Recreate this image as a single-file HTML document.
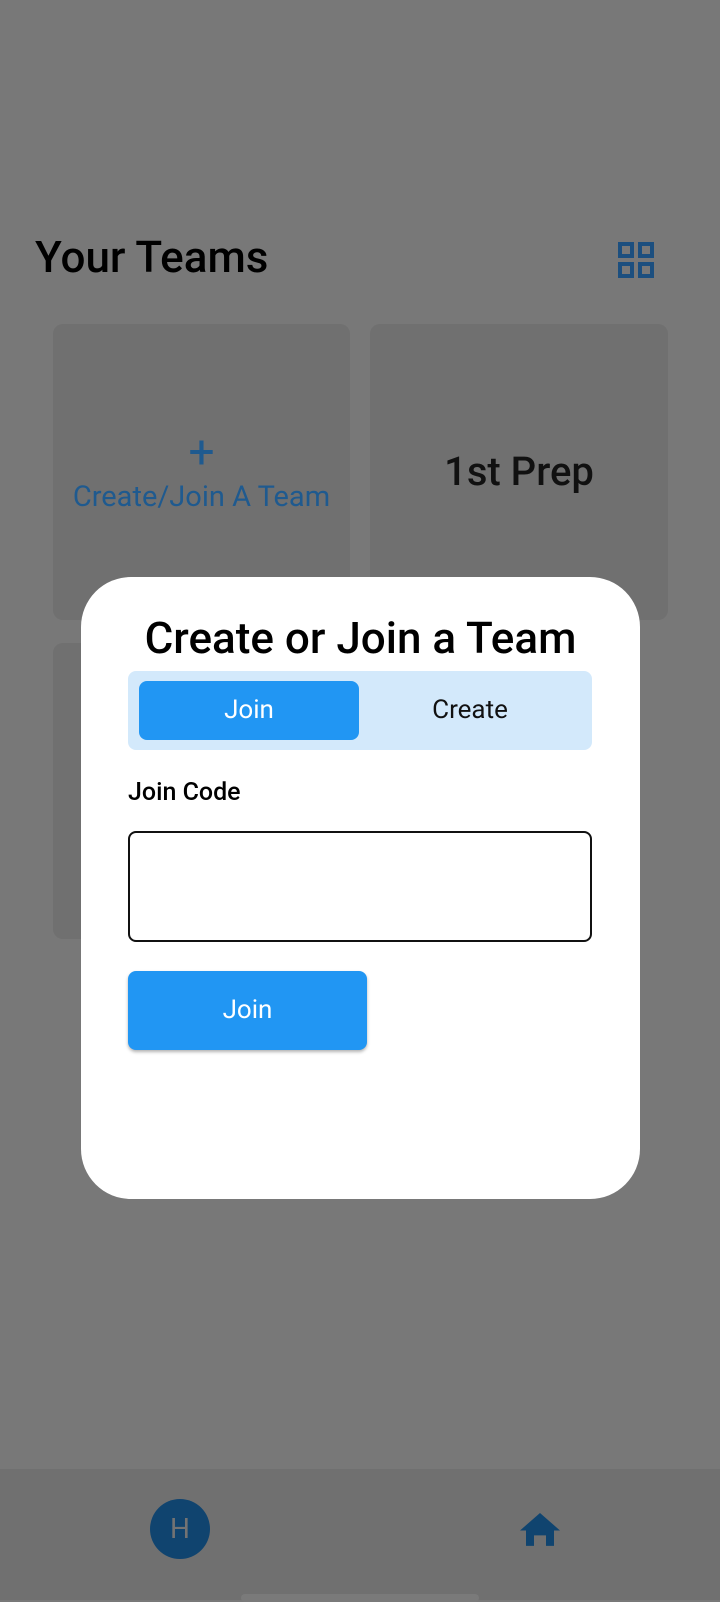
<!DOCTYPE html>
<html><head><meta charset="utf-8"><style>
*{margin:0;padding:0;box-sizing:border-box}
body{width:720px;height:1600px;background:#787878;position:relative;overflow:hidden;font-family:"Roboto","Liberation Sans",sans-serif}
.a{position:absolute}
.card{position:absolute;background:#707070;border-radius:10px}
</style></head><body>
<div class="a" style="left:35px;top:231px;font-size:44px;font-weight:500;color:#000">Your Teams</div>
<svg class="a" style="left:618px;top:242px" width="36" height="36" viewBox="0 0 36 36" fill="none" stroke="#1c4f7f" stroke-width="4"><rect x="2" y="2" width="12" height="12"/><rect x="22" y="2" width="12" height="12"/><rect x="2" y="22" width="12" height="12"/><rect x="22" y="22" width="12" height="12"/></svg>
<div class="card" style="left:53px;top:324px;width:297px;height:296px"></div>
<div class="card" style="left:370px;top:324px;width:298px;height:296px"></div>
<div class="card" style="left:53px;top:643px;width:297px;height:296px"></div>
<div class="a" style="left:53px;top:428px;width:297px;text-align:center;color:#1f5a8f;font-size:46px;line-height:50px">+</div>
<div class="a" style="left:53px;top:480px;width:297px;text-align:center;color:#1f5a8f;font-size:29px">Create/Join A Team</div>
<div class="a" style="left:370px;top:448px;width:298px;text-align:center;color:#111;font-size:40px;font-weight:500">1st Prep</div>
<div class="a" style="left:0;top:1469px;width:720px;height:131px;background:#707070"></div>
<div class="a" style="left:150px;top:1499px;width:60px;height:60px;border-radius:50%;background:#10446f;color:#737373;font-size:28px;text-align:center;line-height:60px">H</div>
<svg class="a" style="left:520px;top:1513px" width="40" height="33" viewBox="0 0 40 33" fill="#10446f"><path d="M20 0L40 25H34V47H26V32H14V47H6V25H0Z" transform="scale(1,0.7)"/></svg>
<div class="a" style="left:241px;top:1594px;width:238px;height:8px;border-radius:4px;background:#7a7a7a"></div>
<div class="a" style="left:81px;top:577px;width:559px;height:622px;background:#fff;border-radius:50px"></div>
<div class="a" style="left:81px;top:612px;width:559px;text-align:center;font-size:44px;font-weight:500;color:#000">Create or Join a Team</div>
<div class="a" style="left:128px;top:671px;width:464px;height:79px;background:#d3e9fb;border-radius:8px"></div>
<div class="a" style="left:139px;top:681px;width:220px;height:59px;background:#2196f3;border-radius:8px;color:#fff;font-size:26px;text-align:center;line-height:59px">Join</div>
<div class="a" style="left:359px;top:681px;width:222px;height:59px;color:#111;font-size:26px;text-align:center;line-height:59px">Create</div>
<div class="a" style="left:128px;top:778px;font-size:25px;font-weight:500;color:#000">Join Code</div>
<div class="a" style="left:128px;top:831px;width:464px;height:111px;border:2px solid #111;border-radius:8px"></div>
<div class="a" style="left:128px;top:971px;width:239px;height:79px;background:#2196f3;border-radius:8px;color:#fff;font-size:26px;text-align:center;line-height:79px;box-shadow:0 2px 3px rgba(0,0,0,.3)">Join</div>
</body></html>
